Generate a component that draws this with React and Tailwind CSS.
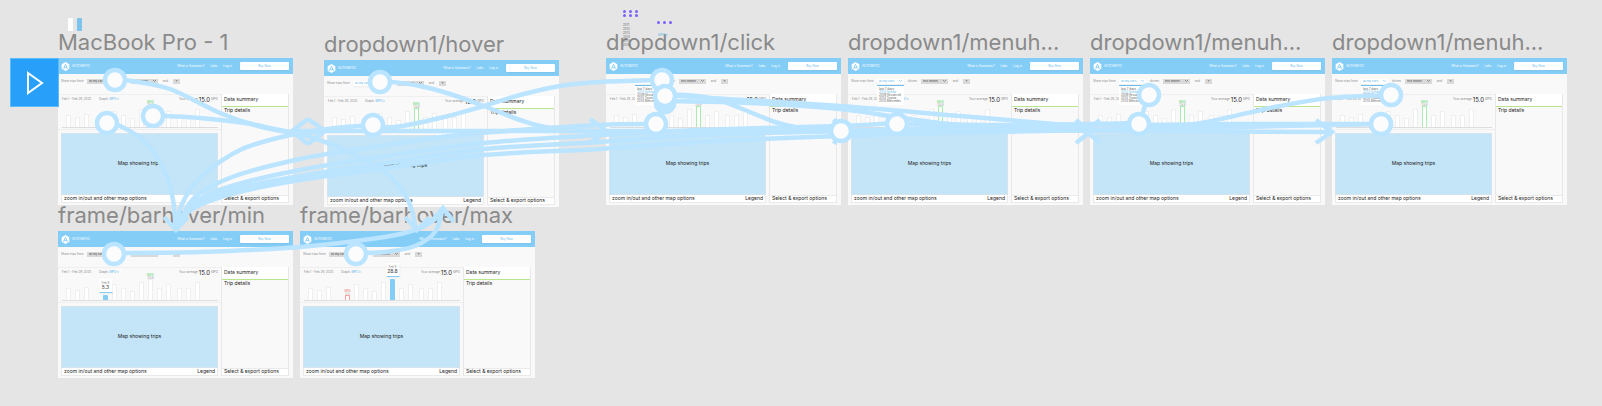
const BARS = [12, 10, 13, 5, 16, 12, 9, 18, 21, 12, 16, 12, 12, 18];
const WIRE = "#bae4ff";

const FRAMES = [
  { name: "MacBook Pro - 1", place: "left-[58px] top-[27px]" },
  { name: "dropdown1/hover", place: "left-[324px] top-[29px]", active: true },
  { name: "dropdown1/click", place: "left-[606px] top-[27px]", menu: true, active: true },
  { name: "dropdown1/menuh...", place: "left-[848px] top-[27px]", menu: true, active: true },
  { name: "dropdown1/menuh...", place: "left-[1090px] top-[27px]", menu: true, active: true },
  { name: "dropdown1/menuh...", place: "left-[1332px] top-[27px]", menu: true, active: true },
  { name: "frame/barhover/min", place: "left-[58px] top-[200px]", hover: "min" },
  { name: "frame/barhover/max", place: "left-[300px] top-[200px]", hover: "max" },
];

const WIRES = [
  [[115, 80], [132, 81], [170, 89], [220, 113], [258, 126], [290, 132], [324, 132]],
  [[153, 115], [165, 116], [200, 118], [245, 123], [275, 129], [310, 137], [345, 150], [385, 172], [408, 200], [416, 230]],
  [[107, 123], [120, 126], [145, 142], [165, 172], [173, 200], [176, 230]],
  [[373, 125], [335, 128], [290, 135], [240, 150], [200, 178], [182, 204], [176, 230]],
  [[656, 124], [600, 125], [520, 130], [450, 136], [360, 149], [300, 159], [235, 176], [195, 197], [176, 230]],
  [[897, 123], [840, 126], [700, 130], [600, 135], [484, 143], [380, 157], [300, 170], [235, 185], [193, 203], [176, 230]],
  [[1139, 123], [1000, 126], [840, 131], [700, 135], [600, 142], [484, 149], [380, 164], [300, 176], [235, 189], [192, 207], [176, 230]],
  [[1381, 124], [1140, 129], [940, 133], [840, 136], [700, 142], [600, 149], [484, 155], [380, 169], [300, 180], [235, 193], [192, 209], [176, 230]],
  [[380, 82], [392, 82], [420, 86], [450, 94], [484, 106], [520, 120], [550, 128], [606, 132]],
  [[373, 125], [395, 127], [440, 118], [484, 106], [520, 95], [560, 86], [600, 82], [662, 80]],
  [[292, 131], [450, 131], [606, 131], [841, 131]],
  [[665, 95], [685, 95], [715, 99], [740, 108], [775, 122], [800, 128], [841, 131]],
  [[665, 95], [710, 98], [840, 106], [960, 116], [1090, 127]],
  [[665, 101], [750, 103], [840, 109], [895, 117], [940, 123], [980, 126], [1090, 128]],
  [[897, 124], [990, 125], [1139, 125]],
  [[841, 131], [990, 130], [1110, 131], [1332, 132]],
  [[1139, 125], [1230, 124], [1381, 124]],
  [[1139, 123], [1165, 127], [1195, 124], [1230, 117], [1280, 106], [1330, 98], [1391, 95]],
  [[1149, 95], [1139, 123]],
  [[114, 253], [200, 252], [300, 247], [385, 237], [415, 230], [434, 220], [443, 208]],
  [[356, 253], [385, 252], [415, 246], [435, 232], [443, 208]],
];

const ARROWS = [
  "M308 119L325 131L308 144",
  "M308 119L292 131L308 144",
  "M590 119L606 131L590 143",
  "M834 119L841 131L834 144",
  "M1076 120L1090 132L1076 143",
  "M1100 120L1086 131L1100 143",
  "M1316 120L1332 132L1316 143",
  "M164 217L176 230L188 217",
  "M405 217L417 230L430 217",
  "M431 222L443 208L454 222",
];

const NODES = [
  [115, 80], [107, 123], [153, 116], [380, 82], [373, 125], [662, 80], [656, 124],
  [665, 96], [841, 131], [897, 124], [1139, 124], [1149, 95], [1381, 124], [1391, 95],
  [114, 254], [356, 254],
];

function smooth(p) {
  let d = `M${p[0][0]} ${p[0][1]}`;
  for (let i = 0; i < p.length - 1; i++) {
    const a = p[i - 1] || p[i];
    const b = p[i];
    const c = p[i + 1];
    const e = p[i + 2] || c;
    d += `C${b[0] + (c[0] - a[0]) / 6} ${b[1] + (c[1] - a[1]) / 6} ${c[0] - (e[0] - b[0]) / 6} ${c[1] - (e[1] - b[1]) / 6} ${c[0]} ${c[1]}`;
  }
  return d;
}

function Header() {
  return (
    <header className="flex h-4 items-center bg-[#84cdf7] pr-1 pl-[3px] text-[3px] text-white">
      <svg viewBox="0 0 20 20" className="h-[9px] w-[9px]" aria-hidden="true">
        <path d="M10 0L18.500 5V15L10 20L1.500 15V5Z" fill="#fff" />
        <path d="M5.500 15L10 5L14.500 15M7 12.500H13" fill="none" stroke="#84cdf7" strokeWidth="2" />
      </svg>
      <span className="ml-[2px]">AUTOMATIC</span>
      <nav className="ml-auto flex items-center gap-[6px] whitespace-nowrap">
        <a href="#about">What is Automatic?</a>
        <a href="#labs">Labs</a>
        <a href="#login">Log in</a>
      </nav>
      <button className="ml-2 h-2 w-[49px] rounded-[1px] bg-white text-[#6bbdec] shadow-xs">Buy Now</button>
    </header>
  );
}

function Picker({ label, value, active }) {
  return (
    <span className={active ? "flex h-[5px] w-[27px] items-center bg-white text-[#5bb5ea] shadow-xs" : "flex h-[5px] w-[27px] items-center bg-[#d9d9d9] text-[#444]"}>
      <select aria-label={label} className="w-[22px] appearance-none bg-transparent pl-[2px] text-[3px] leading-none">
        <option>{value}</option>
      </select>
      <svg viewBox="0 0 6 4" className="h-[2px] w-[3px]" aria-hidden="true">
        <path d="M0 0L3 3L6 0" fill="none" stroke="currentColor" />
      </svg>
    </span>
  );
}

function Toolbar({ active, menu }) {
  return (
    <div className="relative flex h-5 items-center pb-[6px] pl-[3px] text-[3px] text-[#8a8a8a]">
      <span className="w-[26px] whitespace-nowrap">Show trips from</span>
      <Picker label="Vehicle" value="all my cars" active={active} />
      <span className="w-[17px] text-center">driven</span>
      <Picker label="Period" value="this month" />
      <span className="w-[15px] text-center">and</span>
      <button aria-label="Add filter" className="flex h-[5px] w-[7px] items-center justify-center bg-[#d9d9d9] text-[4px] text-[#333]">+</button>
      {menu && (
        <ul className="absolute top-[11px] left-[29px] z-10 h-5 w-[27px] border-t border-[#6bbdec] bg-white pt-[2px] pl-[2px] text-[3px] leading-[3px] whitespace-nowrap text-[#666]">
          <li>last 7 days</li>
          <li className="text-[#6bbdec]">2012 Honda</li>
          <li>2009 Nissan alt</li>
          <li>2014 Toyota</li>
          <li>2014 Mercedes</li>
        </ul>
      )}
    </div>
  );
}

function barStyle(i, hover) {
  if (hover === "min" && i === 3) return "bg-[#84cdf7]";
  if (hover === "max" && i === 8) return "bg-[#84cdf7]";
  if (i === 3) return "border border-b-0 border-[#f5a3a3] bg-white";
  if (i === 8 && !hover) return "border border-b-0 border-[#a9ecb0] bg-white";
  return "border border-b-0 border-[#efefef] bg-white";
}

function Chart({ hover }) {
  return (
    <section className="flex h-[36px] flex-col border-y border-[#efefef] pr-[3px] pl-1">
      <div className="flex h-[9px] items-center text-[3px] whitespace-nowrap text-[#8a8a8a]">
        <span className="w-[37px]">Feb 1 - Feb 29, 2020</span>
        <span>Graph: <span className="text-[#5bb5ea]">MPG ▾</span></span>
        <span className="ml-auto">Your average</span>
        <span className="mx-[1px] text-[6px] text-[#222]">15.0</span>
        <span>MPG</span>
      </div>
      <div className="flex h-6 items-end border-b border-[#ddd]">
        {BARS.map((height, i) => (
          <div
            key={i}
            className={`relative w-[5px] shrink-0 rounded-t-[1px] ${i === 3 ? "ml-[14px]" : i === 11 ? "ml-[6px]" : "ml-1"} ${barStyle(i, hover)}`}
            style={{ height }}
          >
            {i === 8 && hover !== "max" && (
              <span className="absolute bottom-full left-1/2 -translate-x-1/2 text-center text-[3px] leading-[3px] text-[#aaa]">
                <span className="block text-[#4fd65f]">MAX</span>28.8
              </span>
            )}
            {i === 3 && hover === "max" && (
              <span className="absolute bottom-full left-1/2 -translate-x-1/2 text-center text-[3px] leading-[3px] text-[#aaa]">
                <span className="block text-[#f07070]">MIN</span>5.3
              </span>
            )}
            {((i === 3 && hover === "min") || (i === 8 && hover === "max")) && (
              <span className="absolute bottom-full left-1/2 z-10 mb-[2px] flex h-[14px] w-[13px] -translate-x-1/2 flex-col items-center justify-center border-b border-[#84cdf7] bg-white text-[5px] leading-[5px] text-[#444] shadow-xs">
                <span className="text-[3px] leading-[3px] text-[#888]">Feb 9</span>
                {i === 3 ? "5.3" : "28.8"}
              </span>
            )}
          </div>
        ))}
      </div>
    </section>
  );
}

function Frame({ name, place, active, menu, hover }) {
  return (
    <article className={`absolute w-[235px] ${place}`}>
      <h2 className="h-[31px] text-[22px] leading-[31px] whitespace-nowrap text-[#8a8a8a]">{name}</h2>
      <div className="flex flex-col bg-[#f9f9f9] pb-[2px] text-[5px] text-[#222]">
        <Header />
        <Toolbar active={active} menu={menu} />
        <div className="flex pr-1">
          <div className="flex w-[163px] flex-col">
            <Chart hover={hover} />
            <div className="mx-[3px] mt-[3px] flex h-[62px] items-center justify-center border border-[#d5e4ec] bg-[#c4e5f8]">Map showing trips</div>
            <div className="mx-[3px] flex h-2 items-center justify-between border border-t-0 border-[#eaeaea] bg-white px-[2px] whitespace-nowrap">
              <span>zoom in/out and other map options</span>
              <span>Legend</span>
            </div>
          </div>
          <aside className="flex flex-1 flex-col border-x border-[#e8e8e8] whitespace-nowrap">
            <h3 className="flex h-3 items-center bg-white pl-[2px]">Data summary</h3>
            <div className="h-px bg-[#b9e68c]" />
            <h3 className="flex h-2 items-center pl-[2px]">Trip details</h3>
            <div className="mt-auto flex h-2 items-center border-y border-[#eaeaea] bg-white pl-[2px]">Select &amp; export options</div>
          </aside>
        </div>
      </div>
    </article>
  );
}

function Wires() {
  return (
    <svg className="pointer-events-none absolute top-0 left-0 z-20 h-[406px] w-[1602px]" viewBox="0 0 1602 406" fill="none" stroke={WIRE} strokeWidth="4.500" aria-hidden="true">
      {WIRES.map((points, i) => <path key={i} d={smooth(points)} />)}
      {ARROWS.map((d) => <path key={d} d={d} />)}
      <circle cx="665" cy="103" r="11" fill={WIRE} strokeWidth="1" />
      {NODES.map(([x, y]) => <circle key={`${x}-${y}`} cx={x} cy={y} r="10" fill="#fcfcfc" />)}
    </svg>
  );
}

function Dots({ count }) {
  return Array.from({ length: count }, (_, i) => <i key={i} className="h-[3px] w-[3px] rounded-full bg-[#7b61ff]" />);
}

export default function App() {
  return (
    <main className="relative min-h-screen w-full overflow-hidden bg-[#e5e5e5] font-['Inter',sans-serif]">
      <div className="absolute top-[18px] left-[68px] flex gap-1">
        <i className="h-[13px] w-[5px] rounded-t-[1px] bg-white" />
        <i className="h-[13px] w-[5px] rounded-t-[1px] bg-[#7cc4ee]" />
      </div>
      <div className="absolute top-[10px] left-[623px] grid grid-cols-3 gap-x-[3px] gap-y-[1px]"><Dots count={6} /></div>
      <div className="absolute top-[21px] left-[657px] flex gap-[3px]"><Dots count={3} /></div>
      {FRAMES.map((frame) => <Frame key={frame.place} {...frame} />)}
      <ul className="absolute top-[23px] left-[623px] text-[3px] leading-[4px] text-[#666]">
        <li>2011</li><li>2012</li><li>2013</li><li>2014</li><li>2015</li><li>2016</li>
      </ul>
      <span className="absolute top-[33px] left-[658px] text-[3px] leading-[4px] text-[#5bb5ea]">MPG ▾</span>
      <button aria-label="Play prototype" className="absolute top-[58px] left-[10px] flex h-[49px] w-[49px] items-center justify-center border border-[#5cbcfb] bg-[#28a0fa]">
        <svg viewBox="0 0 18 24" className="h-6 w-[18px]" fill="none" stroke="#fff" strokeWidth="2" aria-hidden="true">
          <path d="M2 2L16 12L2 22Z" />
        </svg>
      </button>
      <Wires />
    </main>
  );
}
